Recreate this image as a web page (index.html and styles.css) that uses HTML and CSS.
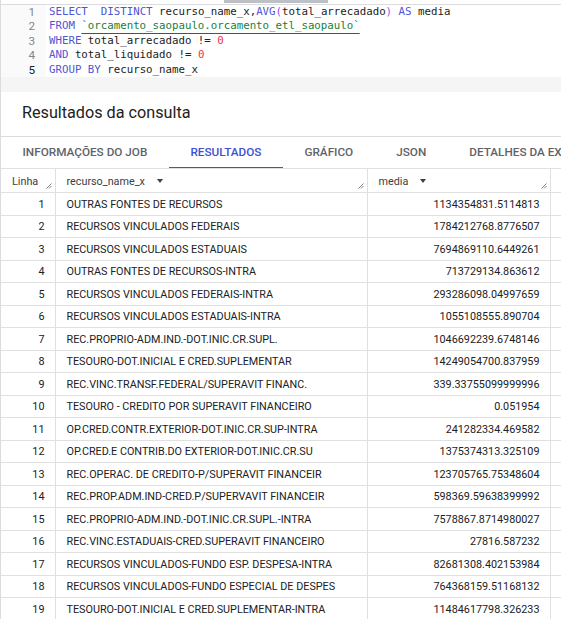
FILE: index.html
```html
<!DOCTYPE html>
<html lang="pt">
<head>
<meta charset="utf-8">
<title>Resultados da consulta</title>
<link rel="stylesheet" href="styles.css">
</head>
<body>
<div class="page">
  <div class="topstrip"><div class="handle"></div></div>
  <div class="editor">
    <div class="gutter">
      <div class="ln">1</div>
      <div class="ln">2</div>
      <div class="ln">3</div>
      <div class="ln">4</div>
      <div class="ln active">5</div>
    </div>
    <div class="code">
      <div class="cl"><span class="kw">SELECT</span>  <span class="kw">DISTINCT</span> recurso_name_x,<span class="kw">AVG</span><span class="par">(</span>total_arrecadado<span class="par">)</span> <span class="kw">AS</span> media</div>
      <div class="cl"><span class="kw">FROM</span> <span class="str">`orcamento_saopaulo.orcamento_etl_saopaulo`</span></div>
      <div class="cl"><span class="kw">WHERE</span> total_arrecadado != <span class="num">0</span></div>
      <div class="cl"><span class="kw">AND</span> total_liquidado != <span class="num">0</span></div>
      <div class="cl"><span class="kw">GROUP</span> <span class="kw">BY</span> recurso_name_x</div>
    </div>
  </div>
  <div class="editor-foot"></div>
  <div class="results-head"><h2 class="results-title">Resultados da consulta</h2></div>
  <div class="tabs">
    <div class="tab">INFORMAÇÕES DO JOB</div>
    <div class="tab tab-active">RESULTADOS</div>
    <div class="tab">GRÁFICO</div>
    <div class="tab">JSON</div>
    <div class="tab tab-last">DETALHES DA EXECUÇÃO</div>
  </div>
  <table class="grid">
    <colgroup>
      <col class="c-num"><col class="c-name"><col class="c-val"><col class="c-rest">
    </colgroup>
    <thead>
      <tr>
        <th class="h-num"><span class="htext">Linha</span><svg class="grip" width="6" height="6" viewBox="0 0 6 6"><path d="M0.5 5.5L5.5 0.5M3 5.5L5.5 3" stroke="#5f6368" stroke-width="0.8" fill="none"/></svg></th>
        <th><span class="htext">recurso_name_x</span><span class="arrow"></span><svg class="grip" width="6" height="6" viewBox="0 0 6 6"><path d="M0.5 5.5L5.5 0.5M3 5.5L5.5 3" stroke="#5f6368" stroke-width="0.8" fill="none"/></svg></th>
        <th><span class="htext">media</span><span class="arrow"></span><svg class="grip" width="6" height="6" viewBox="0 0 6 6"><path d="M0.5 5.5L5.5 0.5M3 5.5L5.5 3" stroke="#5f6368" stroke-width="0.8" fill="none"/></svg></th>
        <th></th>
      </tr>
    </thead>
    <tbody>
      <tr><td class="n">1</td><td>OUTRAS FONTES DE RECURSOS</td><td class="v">1134354831.5114813</td><td></td></tr>
      <tr><td class="n">2</td><td>RECURSOS VINCULADOS FEDERAIS</td><td class="v">1784212768.8776507</td><td></td></tr>
      <tr><td class="n">3</td><td>RECURSOS VINCULADOS ESTADUAIS</td><td class="v">7694869110.6449261</td><td></td></tr>
      <tr><td class="n">4</td><td>OUTRAS FONTES DE RECURSOS-INTRA</td><td class="v">713729134.863612</td><td></td></tr>
      <tr><td class="n">5</td><td>RECURSOS VINCULADOS FEDERAIS-INTRA</td><td class="v">293286098.04997659</td><td></td></tr>
      <tr><td class="n">6</td><td>RECURSOS VINCULADOS ESTADUAIS-INTRA</td><td class="v">1055108555.890704</td><td></td></tr>
      <tr><td class="n">7</td><td>REC.PROPRIO-ADM.IND.-DOT.INIC.CR.SUPL.</td><td class="v">1046692239.6748146</td><td></td></tr>
      <tr><td class="n">8</td><td>TESOURO-DOT.INICIAL E CRED.SUPLEMENTAR</td><td class="v">14249054700.837959</td><td></td></tr>
      <tr><td class="n">9</td><td>REC.VINC.TRANSF.FEDERAL/SUPERAVIT FINANC.</td><td class="v">339.33755099999996</td><td></td></tr>
      <tr><td class="n">10</td><td>TESOURO - CREDITO POR SUPERAVIT FINANCEIRO</td><td class="v">0.051954</td><td></td></tr>
      <tr><td class="n">11</td><td>OP.CRED.CONTR.EXTERIOR-DOT.INIC.CR.SUP-INTRA</td><td class="v">241282334.469582</td><td></td></tr>
      <tr><td class="n">12</td><td>OP.CRED.E CONTRIB.DO EXTERIOR-DOT.INIC.CR.SU</td><td class="v">1375374313.325109</td><td></td></tr>
      <tr><td class="n">13</td><td>REC.OPERAC. DE CREDITO-P/SUPERAVIT FINANCEIR</td><td class="v">123705765.75348604</td><td></td></tr>
      <tr><td class="n">14</td><td>REC.PROP.ADM.IND-CRED.P/SUPERVAVIT FINANCEIR</td><td class="v">598369.59638399992</td><td></td></tr>
      <tr><td class="n">15</td><td>REC.PROPRIO-ADM.IND.-DOT.INIC.CR.SUPL.-INTRA</td><td class="v">7578867.8714980027</td><td></td></tr>
      <tr><td class="n">16</td><td>REC.VINC.ESTADUAIS-CRED.SUPERAVIT FINANCEIRO</td><td class="v">27816.587232</td><td></td></tr>
      <tr><td class="n">17</td><td>RECURSOS VINCULADOS-FUNDO ESP. DESPESA-INTRA</td><td class="v">82681308.402153984</td><td></td></tr>
      <tr><td class="n">18</td><td>RECURSOS VINCULADOS-FUNDO ESPECIAL DE DESPES</td><td class="v">764368159.51168132</td><td></td></tr>
      <tr><td class="n">19</td><td>TESOURO-DOT.INICIAL E CRED.SUPLEMENTAR-INTRA</td><td class="v">11484617798.326233</td><td></td></tr>
    </tbody>
  </table>
</div>
</body>
</html>
```

FILE: styles.css
```css
html, body {
  margin: 0;
  padding: 0;
  background: #ffffff;
  overflow: hidden;
}
body {
  font-family: Roboto, "Liberation Sans", Arial, sans-serif;
  color: #202124;
}
.page {
  border-left: 1px solid #dadce0;
  min-height: 619px;
  width: 560px;
  overflow: hidden;
}
.topstrip {
  height: 4px;
  display: flex;
}
.handle {
  margin-left: 223px;
  width: 104px;
  height: 3px;
  background: #bdc1c6;
}
.editor {
  border-top: 1px solid #dadce0;
  display: flex;
  background: #ffffff;
}
.gutter {
  width: 45px;
  background: #fafafa;
  box-sizing: border-box;
  padding-right: 11px;
}
.ln {
  height: 14.4px;
  line-height: 14.4px;
  text-align: right;
  font-family: Roboto, "Liberation Sans", sans-serif;
  font-size: 11.7px;
  color: #80868b;
}
.ln.active {
  color: #202124;
}
.code {
  flex: 1;
  padding-left: 3px;
  font-family: "DejaVu Sans Mono", "Liberation Mono", monospace;
  font-size: 10.75px;
  color: #202124;
}
.cl {
  height: 14.4px;
  line-height: 14.4px;
  white-space: pre;
}
.kw { color: #4f56d4; }
.par { color: #9b4fe6; }
.str {
  color: #188038;
  text-decoration: underline;
  text-decoration-color: #0d7a34;
  text-underline-offset: 3.5px;
  text-decoration-thickness: 1px;
  text-decoration-skip-ink: none;
}
.num { color: #e8334a; }
.editor-foot {
  height: 15px;
  background: #f5f5f5;
}
.results-head {
  height: 44px;
  border-bottom: 1px solid #dadce0;
  padding-left: 21px;
  box-sizing: content-box;
}
.results-title {
  margin: 0;
  padding-top: 10px;
  font-size: 16.2px;
  font-weight: 400;
  line-height: 22px;
  color: #202124;
}
.tabs {
  display: flex;
  height: 32px;
  box-sizing: border-box;
  border-bottom: 1px solid #e0e0e0;
  white-space: nowrap;
  overflow: hidden;
}
.tab {
  padding: 0 21.5px;
  font-size: 11.75px;
  font-weight: 500;
  color: #5f6368;
  line-height: 31px;
  flex: none;
}
.tab-last {
  flex: 1 1 auto;
  min-width: 0;
  overflow: hidden;
  padding-right: 0;
}
.tab-active {
  color: #4050d3;
  border-bottom: 2px solid #4050d3;
  margin-bottom: -1px;
  line-height: 30px;
}
.grid {
  border-collapse: collapse;
  table-layout: fixed;
  width: 560px;
  font-size: 10.8px;
}
.c-num { width: 54px; }
.c-name { width: 312px; }
.c-val { width: 183px; }
.c-rest { width: 11px; }
.grid th {
  height: 24px;
  box-sizing: border-box;
  padding: 0 0 0 11px;
  text-align: left;
  font-weight: 400;
  color: #3c4043;
  border-right: 1px solid #e0e0e0;
  border-bottom: 1px solid #e0e0e0;
  position: relative;
  white-space: nowrap;
}
.grid th .htext {
  vertical-align: middle;
}
.arrow {
  display: inline-block;
  width: 0;
  height: 0;
  margin-left: 12px;
  border-left: 3.5px solid transparent;
  border-right: 3.5px solid transparent;
  border-top: 4px solid #3c4043;
  vertical-align: middle;
}
.grip {
  position: absolute;
  right: 3px;
  bottom: 3px;
}
.grid td {
  height: 22.5px;
  box-sizing: border-box;
  padding: 0 0 0 11px;
  border-right: 1px solid #e0e0e0;
  border-bottom: 1px solid #e0e0e0;
  white-space: nowrap;
  overflow: hidden;
  color: #202124;
}
.grid td.n {
  text-align: right;
  padding: 0 10px 0 0;
}
.grid td.v {
  text-align: right;
  padding: 0 10px 0 0;
}
```
